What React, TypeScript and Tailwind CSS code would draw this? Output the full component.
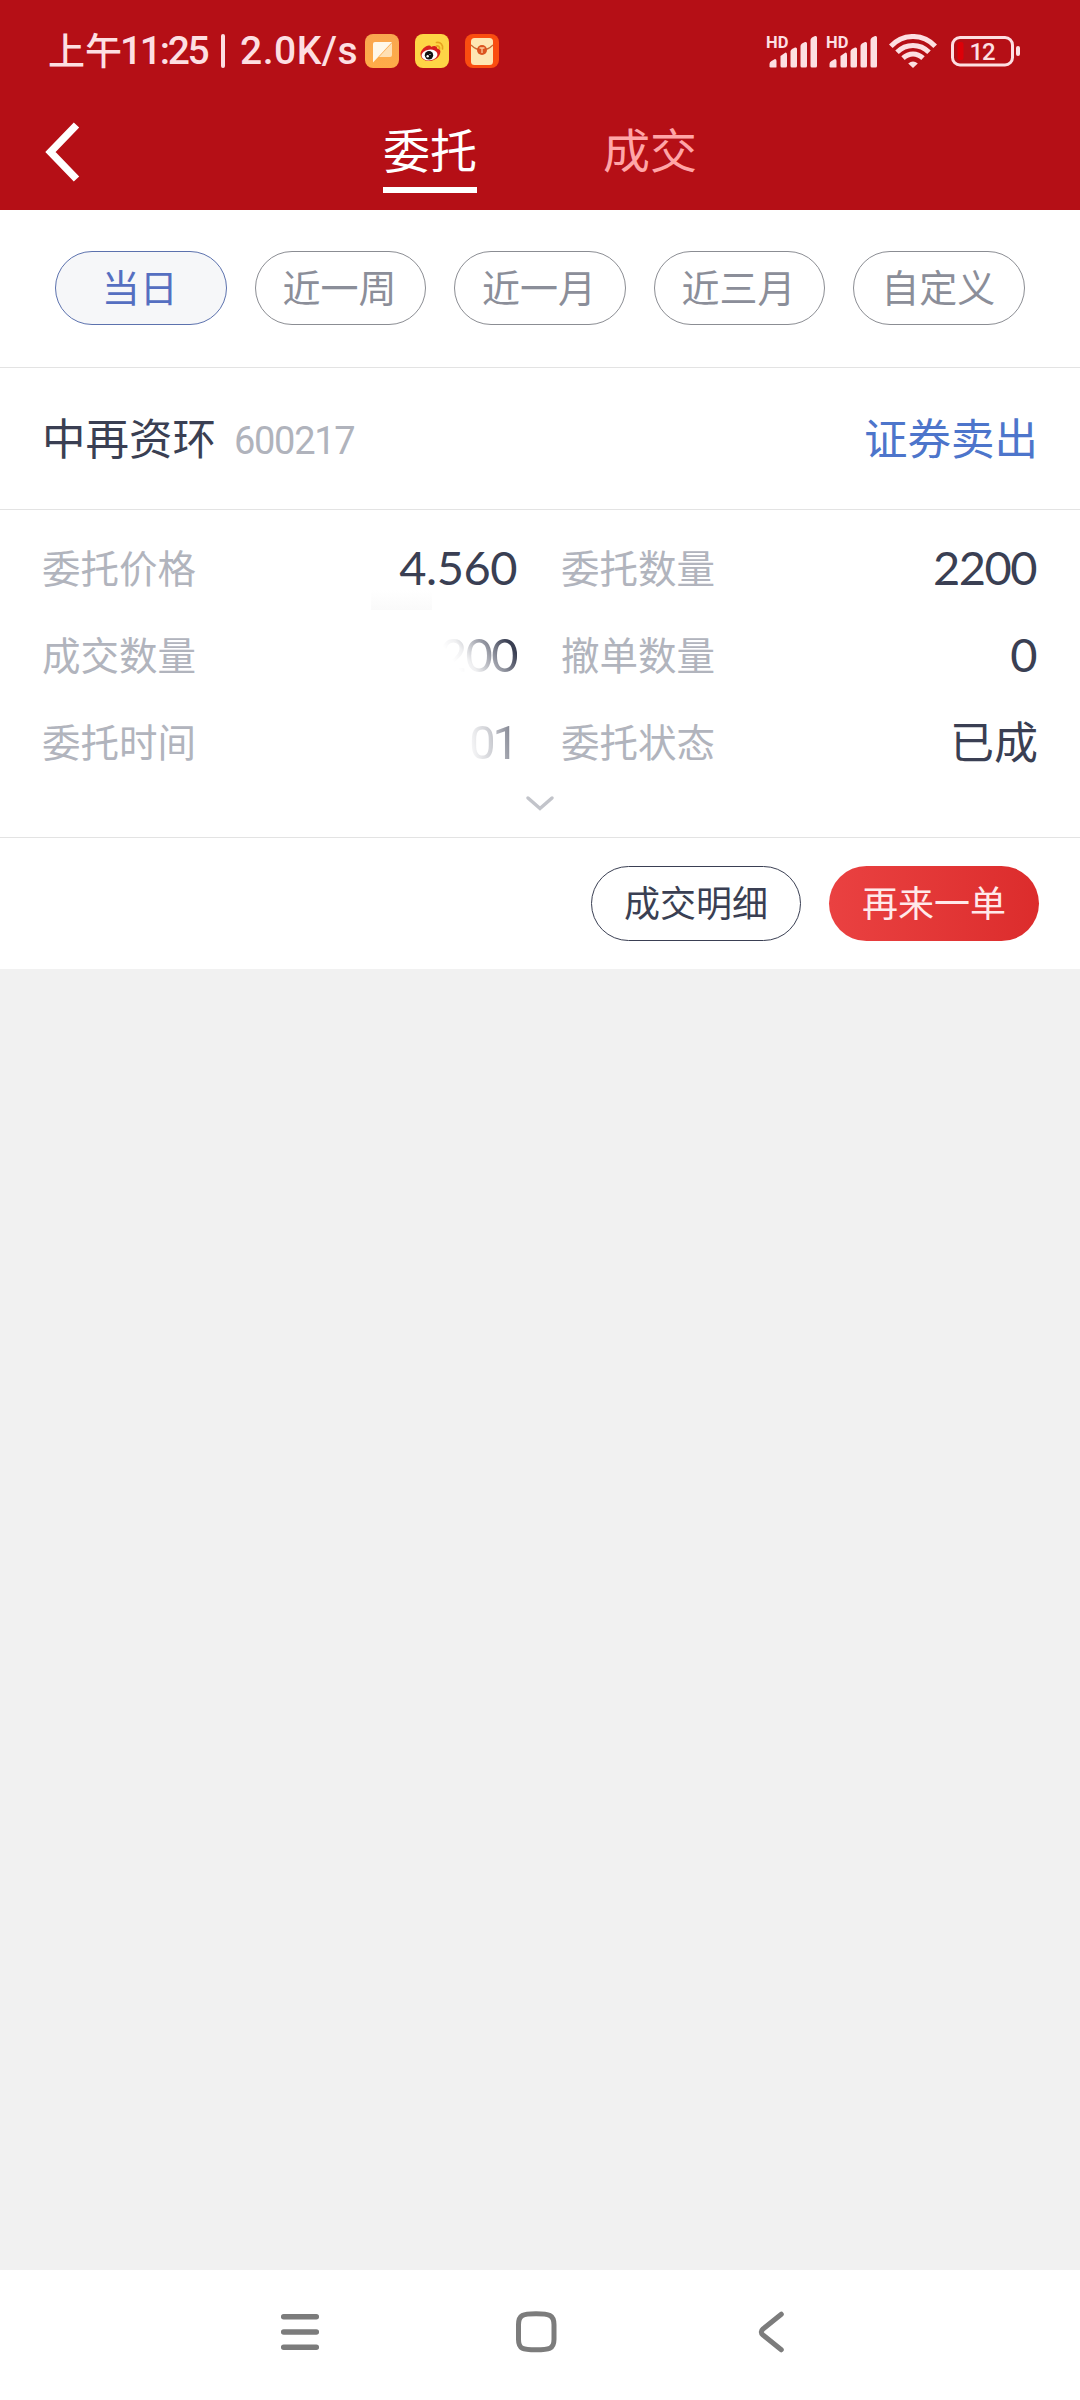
import type { ReactNode } from "react";

type Field = { label: string; value: string; valueClass?: string };

const ranges = ["当日", "近一周", "近一月", "近三月", "自定义"];

const fields: Field[] = [
  { label: "委托价格", value: "4.560", valueClass: "mr-[2px] pb-[2px] font-[Lato] text-[47px] tracking-[-0.5px]" },
  { label: "委托数量", value: "2200", valueClass: "mr-[2px] pb-[2px] font-[Lato] text-[47px] tracking-[-1.5px]" },
  {
    label: "成交数量",
    value: "2200",
    valueClass:
      "mr-[2px] pb-[2px] font-[Lato] text-[47px] tracking-[-1.5px] [mask-image:linear-gradient(55deg,transparent_38%,rgba(0,0,0,0.08)_50%,rgba(0,0,0,0.5)_68%,black_88%)]",
  },
  { label: "撤单数量", value: "0", valueClass: "mr-[2px] pb-[2px] font-[Lato] text-[47px] tracking-[-1.5px]" },
  {
    label: "委托时间",
    value: "01",
    valueClass:
      "mr-[3px] font-[Roboto] text-[47px] tracking-[-3px] [mask-image:linear-gradient(80deg,rgba(0,0,0,0.02)_5%,rgba(0,0,0,0.25)_48%,rgba(0,0,0,0.75)_100%)]",
  },
  { label: "委托状态", value: "已成", valueClass: "pb-[6px] text-[44px]" },
];

function Signal() {
  return (
    <svg width="50" height="34" viewBox="0 0 50 34" className="mr-[10px] overflow-visible" fill="#fddfe2">
      <text x="-1" y="13.500" fontSize="16.500" fontWeight="700" fontFamily="Roboto, sans-serif">
        HD
      </text>
      <path d="M2.500 33v-3q0-2 2-3l3.500-2q1.500 0 1.500 2v6q0 .5-1 .5h-5z" />
      <path d="M13.500 32v-10l5-3.500q1.500 0 1.500 2v11.500q0 1.500-1.500 1.500h-3.500q-1.500 0-1.500-1.500z" />
      <path d="M23.500 32v-14.500q0-1.500 1.500-2.500l3-1.500q2-.5 2 1.500v17q0 1.500-1.500 1.500h-3.500q-1.500 0-1.500-1.500z" />
      <path d="M33.500 32v-20q0-1.500 1.500-2.500l3-1.500q2-.5 2 1.500v22.500q0 1.500-1.500 1.500h-3.500q-1.500 0-1.500-1.500z" />
      <path d="M43.500 32v-26q0-1.500 1.500-2.500l3-1.500q2-.5 2 1.500v28.500q0 1.500-1.500 1.500h-3.500q-1.500 0-1.500-1.500z" />
    </svg>
  );
}

function AppBadges() {
  return (
    <div className="flex gap-4">
      <svg width="34" height="34" viewBox="0 0 34 34">
        <defs>
          <linearGradient id="chat" x1="0" y1="0" x2="0" y2="1">
            <stop offset="0" stopColor="#f9a650" />
            <stop offset="1" stopColor="#ffad48" />
          </linearGradient>
        </defs>
        <rect width="34" height="34" rx="8" fill="url(#chat)" />
        <path d="M27 9v12q0 2-2 2H14L27 9z" fill="#ffe0b4" />
        <path d="M8 10q0-2 2-2h17L8 28.500z" fill="#fff8ea" />
      </svg>
      <svg width="34" height="34" viewBox="0 0 34 34">
        <rect width="34" height="34" rx="8" fill="#fed546" />
        <path
          d="M5.500 20c0-4 5.500-9 9-8.500 1 0 1.500.8 1.500 1.500 2.500-1.500 6.500-1.500 6 1.500 4 .5 4 3.500 2.500 6.500-2 4-7 6-11 6-4.500 0-8-3-8-7z"
          fill="#d7201f"
        />
        <ellipse cx="14.500" cy="21" rx="8" ry="5.300" fill="#fff" transform="rotate(-8 14.500 21)" />
        <circle cx="14" cy="21.300" r="4.200" fill="#111" />
        <circle cx="12.700" cy="22.300" r="1.200" fill="#fff" />
        <circle cx="15" cy="20.500" r=".6" fill="#fff" />
        <path d="M21.500 8.500c4-.8 7 2.500 6 6.500M21.500 12c2-.4 3.500 1 3 3" fill="none" stroke="#e8a21f" strokeWidth="1.700" strokeLinecap="round" />
      </svg>
      <svg width="34" height="34" viewBox="0 0 34 34">
        <rect width="34" height="34" rx="8" fill="#fa4d10" />
        <rect x="6" y="4" width="22" height="27" rx="3.500" fill="#fee6b4" />
        <path d="M6 11q5 5 11 5t11-5" fill="none" stroke="#c96a35" strokeWidth="1.200" />
        <circle cx="17" cy="16" r="5" fill="#db5420" />
        <path d="M14.500 14h5M17 14v5" stroke="#fdc99a" strokeWidth="1.300" />
      </svg>
    </div>
  );
}

function StatusBar() {
  return (
    <div className="flex h-[94px] items-start pl-12 pt-[34px] text-[#fddfe2]">
      <div className="flex h-[34px] w-[317px] items-center whitespace-nowrap text-[37px] font-medium leading-[34px]">
        <span className="w-[72px] pb-[4px]">上午</span>
        <span className="w-[101px] font-[Roboto] text-[39px] tracking-[-2.3px]">11:25</span>
        <span className="h-[34px] w-1 rounded-sm bg-[#fddfe2]" />
        <span className="ml-[15px] font-[Roboto] text-[39px] tracking-[0.5px]">2.0K/s</span>
      </div>
      <AppBadges />
      <div className="ml-[268px] flex items-start">
        <Signal />
        <Signal />
        <svg width="48" height="34" viewBox="0 0 48 34" className="ml-[2px]" fill="none" stroke="#fddfe2" strokeWidth="5">
          <path d="M1.800 12.300C14-.8 34-.8 46.200 12.300" />
          <path d="M8 18.300c9-9 23-9 32 0" />
          <path d="M14 24.200c6-5.600 14-5.600 20 0" />
          <path d="M24 34l-4.800-4.500q4.800-4 9.600 0z" fill="#fddfe2" stroke="none" />
        </svg>
        <svg width="70" height="34" viewBox="0 0 70 34" className="ml-[14px]">
          <rect x="1.500" y="3.500" width="60" height="27.500" rx="7.500" fill="none" stroke="#fddfe2" strokeWidth="3" />
          <rect x="6.500" y="8" width="6" height="18" rx="2" fill="#dd0008" />
          <rect x="65" y="12" width="4" height="10" rx="2" fill="#fddfe2" />
          <text x="31" y="26" textAnchor="middle" fontSize="24" fontWeight="500" letterSpacing="-1.200" fontFamily="Roboto, sans-serif" fill="#fddfe2">
            12
          </text>
        </svg>
      </div>
    </div>
  );
}

function Header() {
  return (
    <div className="flex h-[116px] items-start">
      <svg width="36" height="60" viewBox="0 0 36 60" className="ml-[45px] mt-7" fill="none" stroke="#fff" strokeWidth="7.500">
        <path d="M31.500 3L5.500 30l26 27" />
      </svg>
      <div className="ml-[302px] mt-[30px] w-[94px] whitespace-nowrap text-[47px] leading-[47px] text-white">
        委托
        <div className="mt-[16px] h-[6px] bg-white" />
      </div>
      <div className="ml-[126px] mt-[30px] whitespace-nowrap text-[47px] leading-[47px] text-[#ffa5a7]">成交</div>
    </div>
  );
}

function PillButton({ className, children }: { className: string; children: ReactNode }) {
  return (
    <button className={`h-[75px] w-[210px] rounded-full pb-[5px] text-[36px] leading-none ${className}`}>
      {children}
    </button>
  );
}

export default function App() {
  return (
    <div className="flex h-[2400px] w-[1080px] flex-col overflow-hidden bg-[#f1f1f1] font-['Noto_Sans_CJK_SC',sans-serif]">
      <div className="h-[210px] bg-[#b50f16]">
        <StatusBar />
        <Header />
      </div>

      <div className="h-[759px] bg-white">
        <div className="grid h-[158px] grid-cols-5 gap-7 border-b border-[#e3e3e3] px-[55px] pt-[41px]">
          {ranges.map((r, i) => (
            <button
              key={r}
              className={
                i === 0
                  ? "h-[74px] rounded-full border border-[#5c72ae] bg-[#f6f7f9] pb-[5px] pr-[2px] text-[38px] leading-none text-[#556fc1]"
                  : "h-[74px] rounded-full border border-[#8b8d93] pb-[5px] pr-[2px] text-[38px] leading-none text-[#8b8e99]"
              }
            >
              {r}
            </button>
          ))}
        </div>

        <div className="flex h-[142px] items-center justify-between border-b border-[#e3e3e3] px-[42px] pb-[4px] text-[43.500px] leading-none">
          <div className="flex items-center text-[#3a3f53]">
            中再资环
            <span className="ml-[18px] pt-[9px] font-[Roboto] text-[38px] leading-none tracking-[-1.300px] text-[#b0b3bc]">600217</span>
          </div>
          <div className="text-[#4d75cb]">证券卖出</div>
        </div>

        <div className="relative h-[328px] border-b border-[#e3e3e3] px-[42px] pt-[15px]">
          <div className="absolute left-[371px] top-[80px] h-5 w-[61px] bg-linear-to-b from-white to-[#fafafa]" />
          <div className="relative grid grid-cols-2 gap-x-[42px]">
            {fields.map((f) => (
              <div key={f.label} className="flex h-[87px] items-center justify-between">
                <span className="pb-1 text-[38.500px] leading-none text-[#b1b4bd]">{f.label}</span>
                <span className={`leading-none text-[#3a3f53] ${f.valueClass ?? ""}`}>{f.value}</span>
              </div>
            ))}
          </div>
          <svg width="30" height="18" viewBox="0 0 30 18" className="mx-auto mt-[8px]" fill="none" stroke="#c2c4ca" strokeWidth="3.500" strokeLinecap="round">
            <path d="M3 4l12 10.500L27 4" />
          </svg>
        </div>

        <div className="flex justify-end gap-7 pr-[41px] pt-[28px]">
          <PillButton className="border border-[#3a3f53] text-[#3a3f53]">成交明细</PillButton>
          <PillButton className="bg-linear-to-r from-[#ea4141] to-[#dc2c2c] text-[#ffe9ea]">再来一单</PillButton>
        </div>
      </div>

      <div className="mt-auto flex h-[130px] bg-white pl-[278px] pt-[38px]">
        <svg width="44" height="48" viewBox="0 0 44 48" stroke="#7c7c7c" strokeWidth="5.500" strokeLinecap="round">
          <path d="M5.700 8.700h32.600M5.700 24h32.600M5.700 39.300h32.600" />
        </svg>
        <svg width="48" height="48" viewBox="0 0 48 48" className="ml-[190px]" fill="none" stroke="#7c7c7c" strokeWidth="5">
          <path d="M24 5.700c13 0 18 1 18 11v14.600c0 10-5 10.500-18 10.500s-17.500-.5-17.500-10.500V16.700c0-10 4.500-11 17.500-11z" />
        </svg>
        <svg width="34" height="48" viewBox="0 0 34 48" className="ml-[192px]" fill="none" stroke="#7c7c7c" strokeWidth="5" strokeLinecap="round">
          <path d="M29.300 6.200L11 21q-3.500 3 0 6l18.300 14.800" />
        </svg>
      </div>
    </div>
  );
}
